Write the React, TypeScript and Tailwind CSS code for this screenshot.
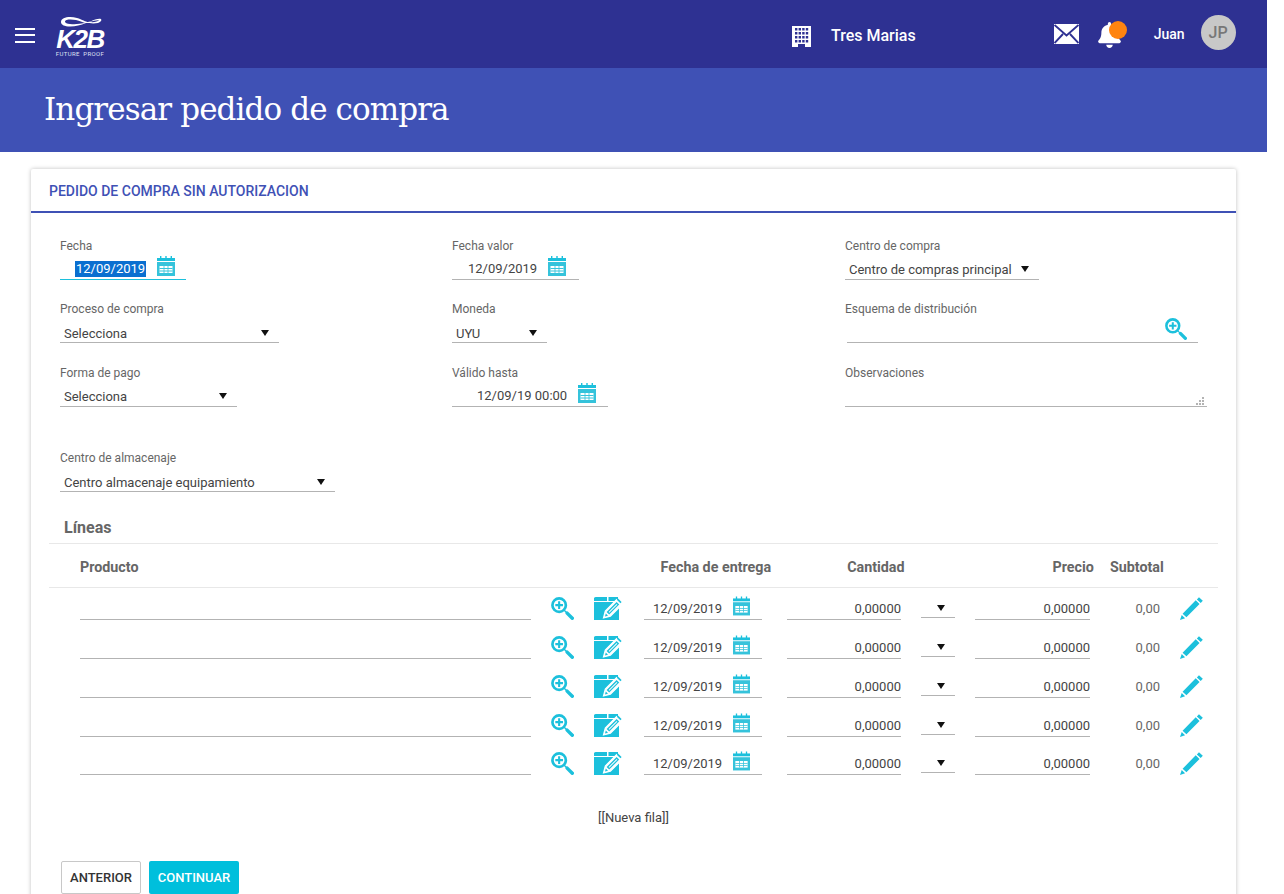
import { FaBell } from 'react-icons/fa'

const rowHeights = ['h-[32px]', 'h-[39px]', 'h-[39px]', 'h-[39px]', 'h-[38px]']

function CalendarIcon({ className }: { className?: string }) {
  return (
    <svg viewBox="0 0 18 20" className={className}>
      <path d="M3 0h1.4v3H3zM8.3 0h1.4v3H8.3zM13.6 0h1.4v3h-1.4z" fill="#1cc0dc" />
      <path d="M0 2h18v3H0z" fill="#1cc0dc" />
      <path d="M0 6h18v14H0z" fill="#35c3db" />
      <path d="M2.5 10h13v7h-13z" fill="#fff" />
      <path d="M2.5 12.1h13v.8h-13zM2.5 14.6h13v.8h-13zM6.6 10h.8v7h-.8zM10.6 10h.8v7h-.8z" fill="#35c3db" />
    </svg>
  )
}

function SearchPlusIcon({ className }: { className?: string }) {
  return (
    <svg viewBox="0 0 24 24" className={className}>
      <circle cx="8.5" cy="8.5" r="7" fill="none" stroke="#1cc0dc" strokeWidth="2.8" />
      <path d="M7.4 4.5h2.2v2.9h2.9v2.2H9.6v2.9H7.4V9.6H4.5V7.4h2.9z" fill="#1cc0dc" />
      <path d="M13.5 13.5l3 3" stroke="#1cc0dc" strokeWidth="1.4" />
      <path d="M16.8 16.8l5.4 5.4" stroke="#1cc0dc" strokeWidth="3.6" strokeLinecap="round" />
    </svg>
  )
}

function NoteIcon({ className }: { className?: string }) {
  return (
    <svg viewBox="0 0 28 23" className={className}>
      <path d="M2 0h11v4H0.2A2.4 2.4 0 0 1 2 0zM14.5 0H24v4h-9.5zM0 5h25v18H0z" fill="#1cc0dc" />
      <path d="M9.5 21l1.8-7L22.6 2.6l5.2 5.2L16.4 19.2z" fill="#fff" stroke="#fff" strokeWidth="1.2" />
      <path d="M12.6 15l10-10 2.6 2.6-10 10z" fill="#1cc0dc" />
      <path d="M14.6 15l8-8 .7.7-8 8z" fill="#fff" />
      <path d="M11 19.6l.8-3 2.2 2.2z" fill="#1cc0dc" />
      <path d="M24 1.5l3.6 3.6-1.2 1.2-3.6-3.6z" fill="#1cc0dc" />
    </svg>
  )
}

function PencilIcon({ className }: { className?: string }) {
  return (
    <svg viewBox="0 0 24 24" className={className}>
      <path d="M19.8 0.2l4 3.7-2.2 2.3-4-3.7zM16.4 3.5l4 3.7L6.7 21.2l-4-3.7zM1.8 18.9l3.5 3.4L0 24z" fill="#1cc0dc" />
    </svg>
  )
}

function Arrow() {
  return (
    <svg viewBox="0 0 8 6" className="w-[8px] h-[6px] shrink-0">
      <path d="M0 0h8L4 6z" fill="#111" />
    </svg>
  )
}

function Label({ children }: { children: string }) {
  return <div className="text-[12px] leading-[14px] text-[#666]">{children}</div>
}

function SelectField({ label, value, width, box = 'mt-[3px] h-[24px] pb-[1px]' }: { label: string; value: string; width: string; box?: string }) {
  return (
    <div>
      <Label>{label}</Label>
      <div className={`${width} ${box} pl-1 pr-[10px] flex items-end justify-between border-b border-[#b3b3b3] text-[13px] leading-[16px] text-[#444]`}>
        <span>{value}</span>
        <span className="mb-[6px]">
          <Arrow />
        </span>
      </div>
    </div>
  )
}

function DateField({ label, value, width, pad, focused }: { label: string; value: string; width: string; pad: string; focused?: boolean }) {
  return (
    <div>
      <Label>{label}</Label>
      <div className={`${width} ${pad} h-[24px] mt-[3px] pb-[2px] flex items-end border-b ${focused ? 'border-[#1cc0dc]' : 'border-[#b3b3b3]'} text-[13px] leading-[16px] text-[#444]`}>
        <span className={focused ? 'bg-[#0a6fd0] text-white px-px' : ''}>{value}</span>
        <CalendarIcon className="w-[18px] h-[20px] ml-[11px] mb-[1px]" />
      </div>
    </div>
  )
}

function LineRow({ height }: { height: string }) {
  return (
    <div className={`flex items-end ${height} text-[13px] text-[#444]`}>
      <div className="w-[451px] ml-[31px] border-b border-[#b3b3b3] h-px" />
      <SearchPlusIcon className="w-[23px] h-[23px] ml-[20px]" />
      <NoteIcon className="w-[28px] h-[23px] ml-[20px]" />
      <div className="w-[118px] ml-[22px] h-[24px] pl-[9px] pr-[12px] pt-[3px] flex items-center justify-between border-b border-[#b3b3b3]">
        <span>12/09/2019</span>
        <CalendarIcon className="w-[17px] h-[20px] self-start -mt-[3px]" />
      </div>
      <div className="w-[114px] ml-[25px] h-[24px] pt-[3px] flex items-center justify-end border-b border-[#b3b3b3]">0,00000</div>
      <div className="w-[34px] ml-[20px] h-[24px] pl-[5px] pb-[6px] mb-[2px] flex items-end justify-center border-b border-[#b3b3b3]">
        <Arrow />
      </div>
      <div className="w-[115px] ml-[20px] h-[24px] pt-[3px] flex items-center justify-end border-b border-[#b3b3b3]">0,00000</div>
      <div className="w-[70px] h-[24px] pt-[1px] flex items-center justify-end text-[#666]">0,00</div>
      <PencilIcon className="w-[23px] h-[23px] ml-[20px]" />
    </div>
  )
}

export default function App() {
  return (
    <div className="w-[1267px] h-[894px] overflow-hidden bg-white font-['Roboto',sans-serif]">
      {/* Top bar */}
      <header className="h-[68px] bg-[#2e3192] flex items-center text-white">
        <div className="w-5 ml-[15px] mt-[2px] flex flex-col gap-[4.5px]">
          <div className="h-[2px] bg-white" />
          <div className="h-[2px] bg-white" />
          <div className="h-[2px] bg-white" />
        </div>
        <div className="ml-[20px] mt-[6px] w-[50px] h-[42px] flex flex-col items-center">
          <svg viewBox="0 0 42 12" className="w-[42px] h-[12px] ml-[2px] shrink-0">
            <path
              fillRule="evenodd"
              d="M1 6C1 1 10 0 17 2c5 1.500 9 4 11 4 3 0 8-4 13-3 1 1 0 3-3 4-5 1-9 0-12 0-6 2.500-12 4-18 3.500C3 10 1 8 1 6zM5 5.500C5 3 12 3 16 4c4 1 6 2 9 3-5 1-10 1.500-15 1-3 0-5-1-5-2.500zM30 6c3-1 7-2 9-1.700C38 5.500 34 6.500 30 6z"
              fill="#fff"
            />
          </svg>
          <div className="mt-[2px] text-[26px] leading-[18px] font-bold italic tracking-[-1.5px] font-['Liberation_Sans',sans-serif]">K2B</div>
          <div className="mt-[2px] text-[6px] leading-[8px] tracking-[0.35px] text-[#dfe0f2] whitespace-nowrap">FUTURE&nbsp;&nbsp;PROOF</div>
        </div>
        <svg viewBox="0 0 19 21" className="w-[19px] h-[21px] ml-[687px] mt-[4px]">
          <path d="M0 0h19v21h-6v-3H6v3H0z" fill="#fff" />
          <path d="M3 2h2.400v2.400H3zM6.600 2H9v2.400H6.600zM10.200 2h2.400v2.400h-2.400zM13.800 2h2.400v2.400h-2.400zM3 6h2.400v2.400H3zM6.600 6H9v2.400H6.600zM10.200 6h2.400v2.400h-2.400zM13.800 6h2.400v2.400h-2.400zM3 10h2.400v2.400H3zM6.600 10H9v2.400H6.600zM10.200 10h2.400v2.400h-2.400zM13.800 10h2.400v2.400h-2.400zM3 14h2.400v2.400H3zM6.600 14H9v2.400H6.600zM10.200 14h2.400v2.400h-2.400zM13.800 14h2.400v2.400h-2.400z" fill="#2e3192" />
        </svg>
        <span className="ml-[20px] mt-[4px] text-[16px] font-medium">Tres Marias</span>
        <svg viewBox="0 0 25 20" className="w-[25px] h-[20px] ml-[138px]">
          <path d="M0 0h25v20H0z" fill="#fff" />
          <path d="M0.500 1l12 10.500L24.500 1M0.500 19l8.500-9M24.500 19L16 10" fill="none" stroke="#2e3192" strokeWidth="1.900" />
        </svg>
        <div className="relative w-[23px] h-[26px] ml-[19px] mt-[1px]">
          <FaBell className="w-[23px] h-[26px] text-white" />
          <div className="absolute left-[11px] top-[-1px] w-[18px] h-[18px] rounded-full bg-[#ff8410]" />
        </div>
        <span className="ml-[33px] text-[14px] font-medium">Juan</span>
        <div className="ml-[16px] mb-[3px] w-[35px] h-[35px] rounded-full bg-[#c8c8c8] text-[#777] text-[16px] font-medium flex items-center justify-center">JP</div>
      </header>

      {/* Page title */}
      <div className="h-[84px] bg-[#3f51b5] pl-[44px] flex items-center">
        <h1 className="text-[31px] text-white font-['DejaVu_Serif',serif] tracking-[-0.9px] mb-[2px]">Ingresar pedido de compra</h1>
      </div>

      {/* Card */}
      <div className="mt-[17px] ml-[31px] w-[1205px] h-[740px] bg-white shadow-[0_0_4px_rgba(0,0,0,0.25)] rounded-[2px]">
        <div className="h-[44px] pl-[18px] pt-[2px] flex items-center border-b-2 border-[#3f51b5] text-[14px] font-medium text-[#3f51b5]">
          PEDIDO DE COMPRA SIN AUTORIZACION
        </div>

        <div className="pl-[29px] pt-[26px] grid grid-cols-[392px_393px_1fr] grid-rows-[63px_64px_63px_64px]">
          <DateField label="Fecha" value="12/09/2019" width="w-[126px]" pad="pl-[15px]" focused />
          <DateField label="Fecha valor" value="12/09/2019" width="w-[127px]" pad="pl-[16px]" />
          <SelectField label="Centro de compra" value="Centro de compras principal" width="w-[194px]" />

          <SelectField label="Proceso de compra" value="Selecciona" width="w-[219px]" box="mt-[4px] h-[23px]" />
          <SelectField label="Moneda" value="UYU" width="w-[95px]" box="mt-[4px] h-[23px]" />
          <div>
            <Label>Esquema de distribución</Label>
            <div className="w-[351px] ml-[2px] h-[23px] mt-[4px] pr-[11px] flex items-start justify-end border-b border-[#b3b3b3]">
              <SearchPlusIcon className="w-[22px] h-[22px] -mt-[2px]" />
            </div>
          </div>

          <SelectField label="Forma de pago" value="Selecciona" width="w-[177px]" />
          <DateField label="Válido hasta" value="12/09/19 00:00" width="w-[156px]" pad="pl-[25px]" />
          <div>
            <Label>Observaciones</Label>
            <div className="relative w-[362px] h-[24px] mt-[3px] border-b border-[#b3b3b3]">
              <svg viewBox="0 0 8 8" className="absolute right-[3px] bottom-[1px] w-[8px] h-[8px]">
                <path d="M6 0h2v2H6zM3 3h2v2H3zM6 3h2v2H6zM0 6h2v2H0zM3 6h2v2H3zM6 6h2v2H6z" fill="#b3b3b3" />
              </svg>
            </div>
          </div>

          <div className="col-span-3 pt-[22px]">
            <SelectField label="Centro de almacenaje" value="Centro almacenaje equipamiento" width="w-[275px]" box="mt-[4px] h-[23px]" />
          </div>
        </div>

        {/* Lines */}
        <div className="ml-[18px] w-[1169px] mt-[19px]">
          <div className="h-[32px] pl-[15px] pt-[4px] border-b border-[#e8e8e8] text-[16px] leading-[24px] font-bold text-[#666]">Líneas</div>
          <div className="h-[44px] pt-[4px] flex items-center border-b border-[#e8e8e8] text-[14.3px] font-bold text-[#666]">
            <span className="ml-[31px]">Producto</span>
            <span className="ml-[522px]">Fecha de entrega</span>
            <span className="ml-[76px]">Cantidad</span>
            <span className="ml-[148px]">Precio</span>
            <span className="ml-[16px]">Subtotal</span>
          </div>
          <div className="pb-[31px]">
            {rowHeights.map((height, i) => (
              <LineRow key={i} height={height} />
            ))}
          </div>
          <div className="text-center text-[13px] leading-[24px] text-[#444]">[[Nueva fila]]</div>
        </div>

        <div className="ml-[30px] mt-[31px] flex gap-2">
          <button className="w-[80px] h-[33px] border border-[#c8c8c8] rounded-[2px] bg-white text-[13px] font-medium text-[#333]">ANTERIOR</button>
          <button className="w-[90px] h-[33px] rounded-[2px] bg-[#00bfdc] text-[13px] font-medium text-white">CONTINUAR</button>
        </div>
      </div>
    </div>
  )
}
